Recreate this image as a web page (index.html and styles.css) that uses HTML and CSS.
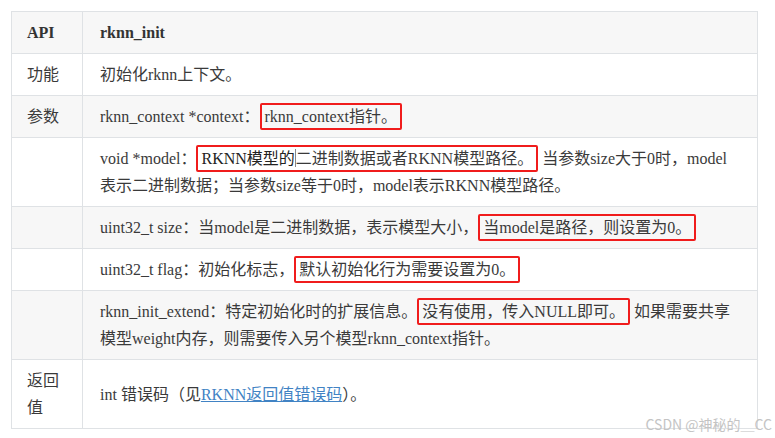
FILE: index.html
```html
<!DOCTYPE html>
<html lang="zh-CN">
<head>
    <meta charset="UTF-8">
    <title>rknn_init</title>
    <link rel="stylesheet" href="styles.css">
</head>
<body>

    <div class="page">
        <table class="api-table">
            <tr class="head">
                <th class="key">API</th>
                <th>rknn_init</th>
            </tr>
            <tr>
                <td class="key">功能</td>
                <td>初始化rknn上下文。</td>
            </tr>
            <tr>
                <td class="key">参数</td>
                <td>rknn_context *context：<span class="mark">rknn_context指针。</span></td>
            </tr>
            <tr>
                <td class="key"></td>
                <td>void *model：<span class="mark"><span class="dark">RKNN模型的</span><span class="caret"></span>二进制数据或者RKNN模型路径。</span> 当参数size大于0时，model<br>表示二进制数据；当参数size等于0时，model表示RKNN模型路径。</td>
            </tr>
            <tr>
                <td class="key"></td>
                <td>uint32_t size：当model是二进制数据，表示模型大小，<span class="mark">当model是路径，则设置为0。</span></td>
            </tr>
            <tr>
                <td class="key"></td>
                <td>uint32_t flag：初始化标志，<span class="mark">默认初始化行为需要设置为0。</span></td>
            </tr>
            <tr>
                <td class="key"></td>
                <td>rknn_init_extend：特定初始化时的扩展信息。<span class="mark">没有使用，传入NULL即可。</span> 如果需要共享<br>模型weight内存，则需要传入另个模型rknn_context指针。</td>
            </tr>
            <tr>
                <td class="key">返回值</td>
                <td>int 错误码（见<a class="link" href="#">RKNN返回值错误码</a>）。</td>
            </tr>
        </table>

        <div class="watermark">CSDN @神秘的＿CC</div>
    </div>

</body>
</html>
```

FILE: styles.css
```css
body { margin: 0; background: #fff; font-family: "Liberation Serif", "Noto Sans CJK SC", serif; color: #3a3a3a; }
.page { position: relative; width: 775px; height: 438px; padding: 11px 0 0 11px; box-sizing: border-box; }

.api-table { border-collapse: collapse; width: 747px; font-size: 16px; line-height: 27px; }
.api-table th, .api-table td { border: 1px solid #dfe2e5; padding: 7px 16px 7px 17px; text-align: left; vertical-align: middle; }
.api-table th { font-weight: bold; color: #333; }
.api-table .key { width: 39px; padding-left: 15px; }
.api-table tr:nth-child(odd) { background: #f7f7f7; }
.api-table tr:nth-child(even) { background: #fff; }

.mark { display: inline-block; line-height: 23px; padding: 0 3px; border: 2px solid #f01c1c; border-radius: 2px; }
.dark { color: #222; }
.caret { display: inline-block; width: 1px; height: 18px; background: #888; vertical-align: -3px; }

.link { color: #4183c4; text-decoration: underline; }

.watermark { position: absolute; right: 3px; bottom: 5px; font-family: "Noto Sans CJK SC", "Liberation Sans", sans-serif; font-size: 14px; line-height: 18px; color: #c4c4c4; }
```
